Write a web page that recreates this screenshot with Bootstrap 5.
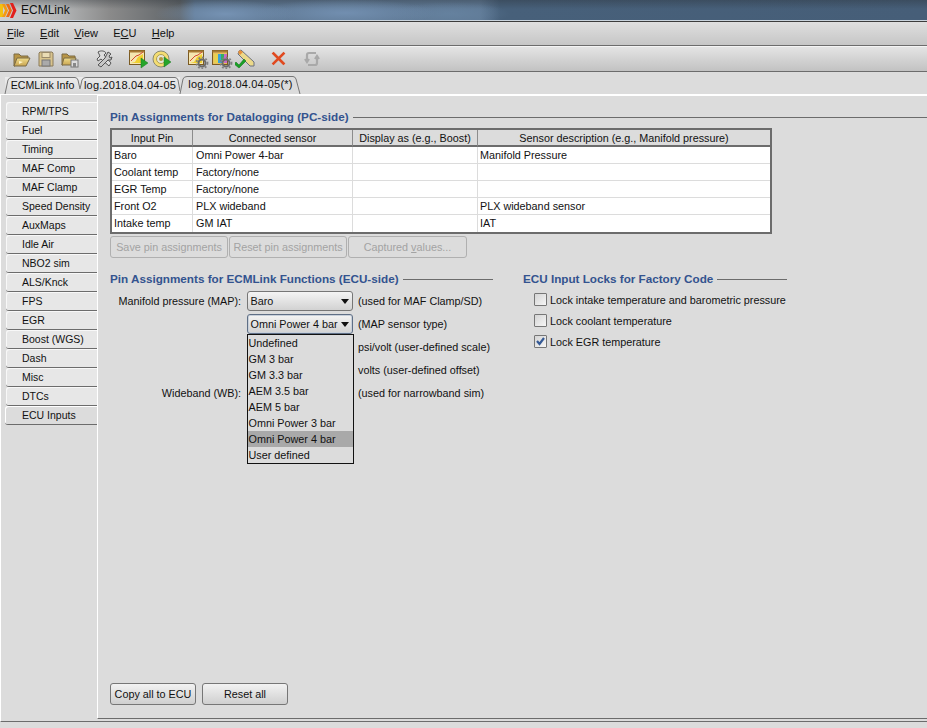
<!DOCTYPE html>
<html lang="en"><head><meta charset="utf-8"><title>ECMLink</title>
<link href="https://cdn.jsdelivr.net/npm/bootstrap@5.3.0/dist/css/bootstrap.min.css" rel="stylesheet">
<style>
html,body{height:100%;overflow:hidden}
body{background:#dcdcdc;color:#111;font:10.8px/14px "Liberation Sans",Arial,sans-serif}
.app{height:728px}
.titlebar{height:21px;flex:none;padding-left:21px;font-size:12px;line-height:20px;color:#111;border-bottom:1px solid #c9d3dc;
background:
 radial-gradient(ellipse 70px 14px at 225px 14px,rgba(125,155,190,.75),transparent),
 radial-gradient(ellipse 90px 14px at 345px 13px,rgba(120,150,185,.75),transparent),
 radial-gradient(ellipse 60px 12px at 450px 14px,rgba(105,135,165,.6),transparent),
 linear-gradient(180deg,rgba(40,45,50,.35),transparent 45%),
 linear-gradient(90deg,#cfcfcf 0,#b4b6b7 60px,#8a8a8a 110px,#5f6468 180px,#5f7893 195px,#5f7995 480px,#47607a 500px,#465e78 100%)}
.flame{position:absolute;left:0;top:3px}
.menubar{height:25px;flex:none;background:linear-gradient(#dfdfdf,#c6c6c6);border-top:1px solid #3c3c3c;border-bottom:1px solid #6c6c6c;padding-left:7px}
.menubar span.mi{margin-right:15.300px;font-size:11px;line-height:22px;display:inline-block}
.mi u,.capt u{text-underline-offset:1px}
.toolstrip{height:26px;flex:none;padding-left:11px;background:linear-gradient(#e4e4e4,#c2c2c2);border-top:1px solid #f4f4f4;border-bottom:1px solid #6c6c6c;display:grid;grid-template-columns:25px 24px 34px 34px 24px 35px 24px 24px 34px 33px 20px;align-items:center}
.toolstrip svg{display:block}
.tabrow{height:22px;flex:none;padding-left:5px;align-items:flex-end;gap:0}
.tabx{position:relative;height:17px;line-height:16px;text-align:center;background:linear-gradient(#ececec,#d8d8d8);font-size:11px;letter-spacing:.2px}
.tabx.first{font-size:10.600px;letter-spacing:0}
.tabx svg{position:absolute;left:0;top:0;overflow:visible}
.tabx span{position:relative}
.tabx.on{height:18px;line-height:17px;background:#dcdcdc}
.workarea{min-height:0;flex:1 1 auto;border-top:1px solid #fff;border-left:1px solid #fff;border-bottom:1px solid #6c6c6c;margin-bottom:6px}
.sidebar{width:96px;flex:none;padding:7px 0 0 5px}
.sidebar.list-group-flush>.list-group-item{height:19px;padding:0 0 0 16px;margin:0;line-height:19px;font-size:10.500px;background:#e7e7e7;color:#111;border-width:0 0 1px;border-style:solid;border-color:#6c6c6c;border-radius:3px 0 0 3px;white-space:nowrap;box-shadow:inset 1px 1px 0 #f8f8f8}
.sidebar.list-group-flush>.list-group-item.active{background:#dcdcdc;margin-left:-1px;padding-left:17px;color:#111;box-shadow:inset 1px 1px 0 #fff}
.panelx{min-width:0;flex:1 1 auto;border-top:1px solid #fff;border-left:1px solid #fff;border-bottom:1px solid #6c6c6c;margin-bottom:2px;padding:14px 0 13px 12px}
.grouphead{font:bold 11.700px/14px "Liberation Sans",sans-serif;color:#33538f;white-space:nowrap;align-items:center;gap:4px}
.grouphead::after{content:"";flex:1 1 auto;height:1px;background:#6c6c6c}
.gridwrap{width:662px;margin-top:4px;border:2px solid #6c6c6c;background:#fff}
.gridwrap .table{margin:0;table-layout:fixed;width:658px;border-collapse:separate;border-spacing:0;font-size:10.800px;--bs-table-bg:transparent}
.gridwrap th{height:17px;padding:0;font-weight:400;text-align:center;line-height:14px;background:#dcdcdc;border:0;border-right:1px solid #8c8c8c;border-bottom:2px solid #6c6c6c;color:#111}
.gridwrap th:last-child{border-right:0}
.gridwrap td{height:17px;padding:1px 3px 0;line-height:15px;border:0;border-right:1px solid #dcdcdc;border-bottom:1px solid #dcdcdc;color:#111;white-space:nowrap;box-shadow:none}
.gridwrap td:first-child,.gridwrap td:last-child{padding-left:2px}
.gridwrap td:last-child{border-right:0}
.gridwrap tr:last-child td{border-bottom:0}
.swbtn{--bs-btn-font-size:10.800px;height:22px;padding:0;line-height:19px;color:#111;border:1px solid #767676;border-radius:3px;background:linear-gradient(#f2f2f2,#cfcfcf);white-space:nowrap}
.swbtn:disabled,.swbtn.disabled{opacity:1;color:#a3a3a3;background:#dcdcdc;border-color:#b0b0b0}
.btnrow{margin-top:2px;gap:1px}
.w118{width:118px}.w117{width:118px}.w119{width:119px}
.lowhead{margin-top:14px}
.colleft{width:383px;flex:none}
.colright{width:264px;flex:none;margin-left:30px}
.mapgrid{display:grid;grid-template-columns:131px 106px auto;grid-auto-rows:20px;row-gap:3px;column-gap:5.500px;margin-top:5px;align-items:center}
.mapgrid .lab{text-align:right;white-space:nowrap}
.mapgrid .note{white-space:nowrap}
.combo{position:relative;height:20px;border:1px solid #767676;border-radius:3px;background:linear-gradient(#f4f4f4,#d2d2d2);padding:0 3px;line-height:18px;white-space:nowrap}
.combo::after{content:"";position:absolute;right:3px;top:7px;border:4.500px solid transparent;border-top:5px solid #111;border-bottom:0}
.combo.foc{border-color:#5f6f86;box-shadow:inset 0 0 0 1px #c8d0da;}
.dropmenu{position:absolute;left:-1px;top:19px;width:107px;min-width:0;padding:0;margin:0;border:1px solid #111;border-radius:0;background:#dcdcdc;z-index:5;display:block}
.dropmenu .dropdown-item{height:16px;padding:0 0 0 1px;line-height:17px;font-size:10.800px;color:#111;background:transparent}
.dropmenu .dropdown-item.active{background:#a9a9a9;color:#111}
.locks{margin-top:3px;padding-left:11px}
.locks .form-check{height:21px;min-height:0;padding:0;margin:0;display:flex;align-items:center;gap:3px;white-space:nowrap}
.locks .form-check-input{width:13px;height:13px;margin:0;float:none;flex:none;border:1px solid #767676;border-radius:1px;background:linear-gradient(135deg,#d4d4d4,#f6f6f6)}
.locks .form-check-input:checked{background:url("data:image/svg+xml,%3Csvg xmlns='http://www.w3.org/2000/svg' viewBox='0 0 13 13'%3E%3Cpath d='M3 6l2.500 3L10 3' fill='none' stroke='%23355a96' stroke-width='2.200'/%3E%3C/svg%3E") center/13px no-repeat,linear-gradient(135deg,#d4d4d4,#f6f6f6);border-color:#767676}
.locks .form-check-label{color:#111;line-height:14px}
.footbtns{margin-top:auto;gap:6px}
.w86{width:86px}
</style></head>
<body>
<svg width="0" height="0" class="position-absolute"><defs>
<g id="gear"><circle cx="0" cy="0" r="3.500" fill="none" stroke="#6a6a6a" stroke-width="2"/><circle cx="0" cy="0" r="5.500" fill="none" stroke="#808080" stroke-width="1.800" stroke-dasharray="1.800 1.800"/></g>
<g id="chartbox"><rect x="1.500" y="1.500" width="15" height="14" fill="#f5e6b0" stroke="#7a5a22"/><rect x="1.500" y="1.500" width="15" height="2" fill="#a87a35"/><path d="M3 14l4-1 3-5 5-3V14z" fill="#f0d030"/><path d="M3 12l5-5 3-1 4-3" fill="none" stroke="#d54a30"/></g>
<linearGradient id="fold" x1="0" y1="0" x2="0" y2="1"><stop offset="0" stop-color="#f0dc8a"/><stop offset="1" stop-color="#c9a552"/></linearGradient>
</defs></svg>
<div class="app d-flex flex-column position-relative">
 <div class="titlebar position-relative">
  <svg class="flame" width="17" height="15" viewBox="0 0 17 15"><rect x="0" y="1" width="3" height="13" fill="#f2c012"/><path d="M2 1h3l3 6.500-3 6.500H2l3-6.500z" fill="#f49a12"/><path d="M6 1h3l3 6.500-3 6.500H6l3-6.500z" fill="#ee6a12"/><path d="M10 0h3l3.500 7.500L13 15h-3l3-7.500z" fill="#e2201c"/></svg>
  ECMLink
 </div>
 <div class="menubar"><span class="mi"><u>F</u>ile</span><span class="mi"><u>E</u>dit</span><span class="mi"><u>V</u>iew</span><span class="mi">E<u>C</u>U</span><span class="mi"><u>H</u>elp</span></div>
 <div class="toolstrip">
  <svg width="20" height="20" viewBox="0 0 20 20"><path d="M3 5h5l2 2h7v3H6l-2 7H3z" fill="#b89545" stroke="#7a6a45"/><path d="M6 9h13l-4 8H3z" fill="url(#fold)" stroke="#7a6a45"/><path d="M8 12l4 1-4 2z" fill="#fff6c8"/></svg>
  <svg width="20" height="20" viewBox="0 0 20 20"><path d="M4 3h12l1 1v13H3V4z" fill="#d9c48d" stroke="#8a7a5a"/><rect x="6" y="3.500" width="8" height="5" fill="#eadcb4" stroke="#9a8a6a"/><rect x="6" y="11" width="8" height="6" fill="#aaa" stroke="#777"/></svg>
  <svg width="20" height="20" viewBox="0 0 20 20"><path d="M2 5h5l2 2h6v3H5l-2 6H2z" fill="#b89545" stroke="#7a6a45"/><path d="M4 9h12l-2 7H2z" fill="url(#fold)" stroke="#7a6a45"/><rect x="11" y="11" width="7" height="7" fill="#ddd" stroke="#777"/><rect x="13" y="14" width="3" height="4" fill="#888"/></svg>
  <svg width="20" height="20" viewBox="0 0 20 20"><path d="M4 3c3-2 7-1 8 1l-2 2 7 8-2 3-8-7-3 2-1-2 3-3z" fill="#ddd" stroke="#555"/><path d="M14 3l3 2-2 2 1 2 2-1-1 3-3 0-7 7-3-2 7-7z" fill="#c8c8c8" stroke="#555"/></svg>
  <svg width="22" height="20" viewBox="0 0 22 20"><use href="#chartbox"/><path d="M13 9l7 5-7 5z" fill="#25a52a" stroke="#1a7a20" stroke-width=".5"/></svg>
  <svg width="22" height="20" viewBox="0 0 22 20"><circle cx="9" cy="10" r="8" fill="#f4dd72" stroke="#8a8a70"/><circle cx="9" cy="10" r="4.500" fill="#e6e6d8" stroke="#b0a050"/><circle cx="9" cy="10" r="2" fill="#b39a3c"/><path d="M12 8l7 5-7 5z" fill="#25a52a" stroke="#1a7a20" stroke-width=".5"/></svg>
  <svg width="22" height="20" viewBox="0 0 22 20"><use href="#chartbox"/><use href="#gear" x="15" y="14"/></svg>
  <svg width="22" height="20" viewBox="0 0 22 20"><rect x="1.500" y="1.500" width="15" height="14" fill="#e8c060" stroke="#7a5a22"/><rect x="1.500" y="1.500" width="15" height="2" fill="#a87a35"/><rect x="3" y="5" width="4" height="9" fill="#e8d050"/><rect x="7" y="5" width="4" height="9" fill="#3aa0d8"/><rect x="10" y="5" width="3" height="6" fill="#35b060"/><rect x="13" y="5" width="3" height="9" fill="#c86ac8"/><use href="#gear" x="15" y="14"/></svg>
  <svg width="22" height="20" viewBox="0 0 22 20"><path d="M4 2l2-1 13 12 0 4-4 0L3 5z" fill="#ecd98a" stroke="#6a7080"/><path d="M3 3l2-2 3 2-3 3z" fill="#e8903a"/><path d="M1 13l3 3 5-6 2 2-7 7-5-4z" fill="#19a025" stroke="#116a18" stroke-width=".5"/></svg>
  <svg width="20" height="20" viewBox="0 0 20 20"><path d="M4.500 4.500l10 10M14.500 4.500l-10 10" stroke="#e04a20" stroke-width="2.600" stroke-linecap="square"/></svg>
  <svg width="20" height="20" viewBox="0 0 20 20"><path d="M14 4H7Q5 4 5 6v6M3 10l2 3 2-3M6 16h7q2 0 2-2V8M13 10l2-3 2 3" fill="none" stroke="#a9a9a9" stroke-width="2.200"/></svg>
 </div>
 <div class="nav tabrow d-flex">
  <div class="tabx first" style="width:75px"><svg width="75" height="17"><path d="M0 17L3 3Q4 .5 7 .5H70Q72 .5 73 3L75 12" fill="none" stroke="#777"/></svg><span>ECMLink Info</span></div>
  <div class="tabx" style="width:100px"><svg width="100" height="17"><path d="M0 12L2 3Q3 .5 6 .5H95Q97 .5 98 3L100 14" fill="none" stroke="#777"/></svg><span>log.2018.04.04-05</span></div>
  <div class="tabx on" style="width:121px"><svg width="121" height="18"><path d="M0 18L3 3Q4 .5 7 .5H113Q115 .5 116 3L120 18" fill="none" stroke="#777"/></svg><span>log.2018.04.04-05(*)</span></div>
 </div>
 <div class="workarea d-flex">
  <div class="sidebar list-group list-group-flush">
   <div class="list-group-item">RPM/TPS</div><div class="list-group-item">Fuel</div><div class="list-group-item">Timing</div><div class="list-group-item">MAF Comp</div><div class="list-group-item">MAF Clamp</div><div class="list-group-item">Speed Density</div><div class="list-group-item">AuxMaps</div><div class="list-group-item">Idle Air</div><div class="list-group-item">NBO2 sim</div><div class="list-group-item">ALS/Knck</div><div class="list-group-item">FPS</div><div class="list-group-item">EGR</div><div class="list-group-item">Boost (WGS)</div><div class="list-group-item">Dash</div><div class="list-group-item">Misc</div><div class="list-group-item">DTCs</div><div class="list-group-item active">ECU Inputs</div>
  </div>
  <div class="panelx d-flex flex-column">
   <div class="grouphead d-flex">Pin Assignments for Datalogging (PC-side)</div>
   <div class="gridwrap">
    <table class="table">
     <colgroup><col style="width:81px"><col style="width:160px"><col style="width:125px"><col></colgroup>
     <thead><tr><th>Input Pin</th><th>Connected sensor</th><th>Display as (e.g., Boost)</th><th>Sensor description (e.g., Manifold pressure)</th></tr></thead>
     <tbody>
      <tr><td>Baro</td><td>Omni Power 4-bar</td><td></td><td>Manifold Pressure</td></tr>
      <tr><td>Coolant temp</td><td>Factory/none</td><td></td><td></td></tr>
      <tr><td>EGR Temp</td><td>Factory/none</td><td></td><td></td></tr>
      <tr><td>Front O2</td><td>PLX wideband</td><td></td><td>PLX wideband sensor</td></tr>
      <tr><td>Intake temp</td><td>GM IAT</td><td></td><td>IAT</td></tr>
     </tbody>
    </table>
   </div>
   <div class="d-flex btnrow">
    <button class="btn swbtn w118" disabled>Save pin assignments</button>
    <button class="btn swbtn w117" disabled>Reset pin assignments</button>
    <button class="btn swbtn w119 capt" disabled>Captured <u>v</u>alues...</button>
   </div>
   <div class="d-flex lowhead">
    <div class="colleft">
     <div class="grouphead d-flex">Pin Assignments for ECMLink Functions (ECU-side)</div>
     <div class="mapgrid">
      <div class="lab">Manifold pressure (MAP):</div><div class="combo">Baro</div><div class="note">(used for MAF Clamp/SD)</div>
      <div></div>
      <div class="combo foc">Omni Power 4 bar
       <div class="dropdown-menu show dropmenu">
        <div class="dropdown-item">Undefined</div><div class="dropdown-item">GM 3 bar</div><div class="dropdown-item">GM 3.3 bar</div><div class="dropdown-item">AEM 3.5 bar</div><div class="dropdown-item">AEM 5 bar</div><div class="dropdown-item">Omni Power 3 bar</div><div class="dropdown-item active">Omni Power 4 bar</div><div class="dropdown-item">User defined</div>
       </div>
      </div>
      <div class="note">(MAP sensor type)</div>
      <div></div><div></div><div class="note">psi/volt (user-defined scale)</div>
      <div></div><div></div><div class="note">volts (user-defined offset)</div>
      <div class="lab">Wideband (WB):</div><div></div><div class="note">(used for narrowband sim)</div>
     </div>
    </div>
    <div class="colright">
     <div class="grouphead d-flex">ECU Input Locks for Factory Code</div>
     <div class="locks">
      <div class="form-check"><input class="form-check-input" type="checkbox" id="c1"><label class="form-check-label" for="c1">Lock intake temperature and barometric pressure</label></div>
      <div class="form-check"><input class="form-check-input" type="checkbox" id="c2"><label class="form-check-label" for="c2">Lock coolant temperature</label></div>
      <div class="form-check"><input class="form-check-input" type="checkbox" id="c3" checked><label class="form-check-label" for="c3">Lock EGR temperature</label></div>
     </div>
    </div>
   </div>
   <div class="d-flex footbtns">
    <button class="btn swbtn w86">Copy all to ECU</button>
    <button class="btn swbtn w86">Reset all</button>
   </div>
  </div>
 </div>
</div>
</body></html>
